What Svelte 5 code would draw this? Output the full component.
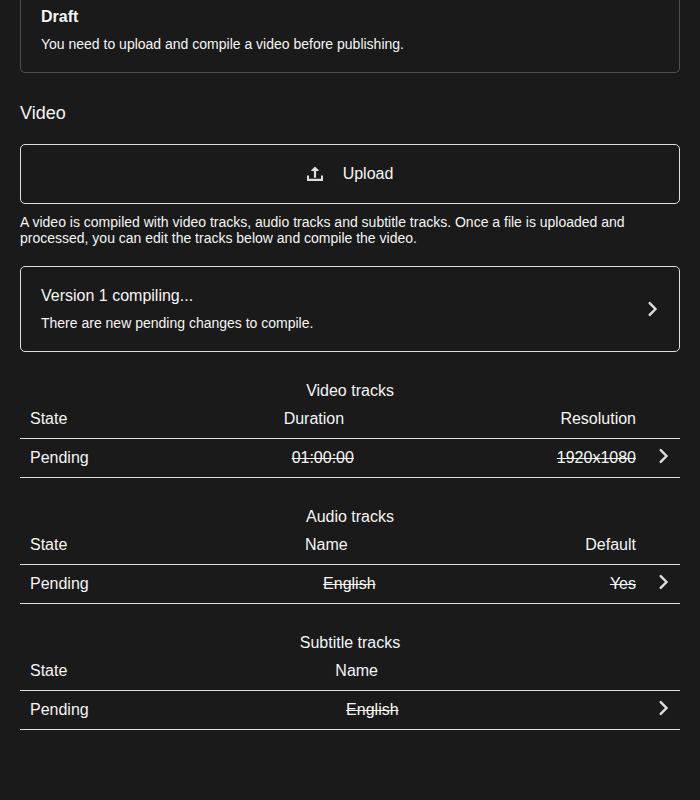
<script>
  const tracks = [
    {
      title: 'Video tracks',
      cls: 'video',
      head: ['State', 'Duration', 'Resolution'],
      row: ['Pending', '01:00:00', '1920x1080'],
    },
    {
      title: 'Audio tracks',
      cls: 'audio',
      head: ['State', 'Name', 'Default'],
      row: ['Pending', 'English', 'Yes'],
    },
    {
      title: 'Subtitle tracks',
      cls: 'subtitle',
      head: ['State', 'Name'],
      row: ['Pending', 'English'],
    },
  ];
</script>

{#snippet chevron()}
  <svg class="chevron" viewBox="0 0 24 24" width="24" height="24" fill="none">
    <path d="M8.7 6.1 14.5 12l-5.8 5.9" stroke="currentColor" stroke-width="2.4" stroke-linecap="round" />
  </svg>
{/snippet}

<main>
  <section class="box status">
    <strong>Draft</strong>
    <p>You need to upload and compile a video before publishing.</p>
  </section>

  <h2>Video</h2>

  <button class="box upload">
    <svg viewBox="0 0 24 24" width="24" height="24" fill="currentColor">
      <path d="M10.9 15.5V9H8.4q-.5-.4 0-.9l3.1-3.2q.5-.4 1 0l3.1 3.2q.5.5 0 .9h-2.5v6.5q-1.1.6-2.2 0z" />
      <path d="M4 13.6V19h16v-5.4h-2v3.2H6v-3.2z" />
    </svg>
    <span>Upload</span>
  </button>
  <p class="hint">
    A video is compiled with video tracks, audio tracks and subtitle tracks. Once a file is uploaded and
    processed, you can edit the tracks below and compile the video.
  </p>

  <button class="box version">
    <span class="text">
      <span>Version 1 compiling...</span>
      <small>There are new pending changes to compile.</small>
    </span>
    {@render chevron()}
  </button>

  {#each tracks as track}
    <section class="tracks {track.cls}">
      <h3>{track.title}</h3>
      <div class="row head">
        {#each track.head as label}<span>{label}</span>{/each}
      </div>
      <div class="row item">
        {#each track.row as value}<span>{value}</span>{/each}
        {@render chevron()}
      </div>
    </section>
  {/each}
</main>

<style>
  :global(body) {
    background: #1a1a1a;
  }
  main {
    box-sizing: border-box;
    height: 800px;
    overflow: hidden;
    padding: 0 20px;
    background: #1a1a1a;
    color: #f5f5f5;
    font: 16px/18px "Liberation Sans", Arial, sans-serif;
  }
  p, h2, h3 {
    margin: 0;
    font-weight: normal;
  }
  .box {
    display: flex;
    box-sizing: border-box;
    width: 100%;
    border: 1px solid #dedede;
    border-radius: 5px;
    background: none;
    color: inherit;
    font: inherit;
    text-align: left;
  }
  .status {
    flex-direction: column;
    gap: 10px;
    height: 73px;
    padding: 8px 20px 0;
    border-color: #4d4d4d;
    border-top: none;
    border-radius: 0 0 5px 5px;
  }
  .status p, .hint, small {
    font-size: 14px;
    line-height: 16px;
  }
  h2 {
    margin: 30px 0 20px;
    font-size: 18px;
    line-height: 21px;
  }
  .upload {
    height: 60px;
    align-items: center;
    justify-content: center;
    gap: 16px;
    padding: 0 4px 0 0;
  }
  svg {
    flex: none;
    color: #dedede;
  }
  .hint {
    margin: 10px 0 20px;
  }
  .version {
    height: 86px;
    align-items: center;
    justify-content: space-between;
    padding: 0 14px 0 20px;
  }
  .text {
    display: flex;
    flex-direction: column;
    gap: 10px;
  }
  .tracks {
    margin-top: 30px;
  }
  h3 {
    font-size: 16px;
    line-height: 18px;
    text-align: center;
  }
  .row {
    display: flex;
    box-sizing: border-box;
    align-items: center;
    justify-content: space-between;
    border-bottom: 1px solid #dedede;
  }
  .head {
    height: 39px;
    padding: 0 44px 0 10px;
  }
  .item {
    height: 39px;
    padding: 0 4px 0 10px;
  }
  .item .chevron {
    margin: 0 0 4px 16px;
  }
  .row span {
    flex: none;
  }
  .item span:nth-child(n + 2) {
    text-decoration: line-through;
  }
  .row span:nth-child(2) {
    margin: 0 auto;
  }
  .subtitle .head {
    padding-right: 34px;
  }
  .subtitle .chevron {
    margin-left: -4px;
  }
</style>
